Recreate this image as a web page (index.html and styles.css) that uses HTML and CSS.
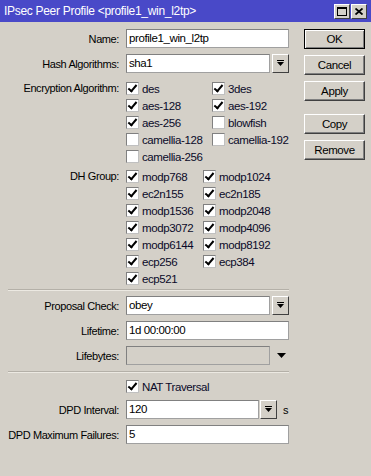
FILE: index.html
```html
<!DOCTYPE html>
<html lang="en">
<head>
    <meta charset="UTF-8">
    <meta name="viewport" content="width=device-width, initial-scale=1.0">
    <title>IPsec Peer Profile</title>
    <link rel="stylesheet" href="styles.css">
</head>
<body>

<div class="window">

    <!-- Title bar -->
    <div class="titlebar">
        <span class="title">IPsec Peer Profile &lt;profile1_win_l2tp&gt;</span>
        <div class="title-buttons">
            <span class="tbtn">
                <svg width="10" height="9" viewBox="0 0 10 9"><rect x="0.5" y="0.5" width="9" height="8" fill="none" stroke="#000"/><rect x="0" y="0" width="10" height="2" fill="#000"/></svg>
            </span>
            <span class="tbtn">
                <svg width="8" height="7" viewBox="0 0 8 7"><path d="M0.5 0.5 L7.5 6.5 M7.5 0.5 L0.5 6.5" stroke="#000" stroke-width="1.8"/></svg>
            </span>
        </div>
    </div>

    <div class="content">

        <!-- Form -->
        <div class="form">
            <div class="row">
                <span class="lbl">Name:</span>
                <div class="field">profile1_win_l2tp</div>
            </div>
            <div class="row">
                <span class="lbl">Hash Algorithms:</span>
                <div class="field short">sha1</div>
                <span class="drop"><svg width="7" height="7" viewBox="0 0 7 7"><rect x="0" y="0" width="7" height="1" fill="#000"/><polygon points="0,2 7,2 3.5,6" fill="#000"/></svg></span>
            </div>

            <div class="row checks enc">
                <span class="lbl">Encryption Algorithm:</span>
                <div class="grid enc-grid">
                    <span class="opt"><i class="cb on"></i>des</span>
                    <span class="opt"><i class="cb on"></i>3des</span>
                    <span class="opt"><i class="cb on"></i>aes-128</span>
                    <span class="opt"><i class="cb on"></i>aes-192</span>
                    <span class="opt"><i class="cb on"></i>aes-256</span>
                    <span class="opt"><i class="cb"></i>blowfish</span>
                    <span class="opt"><i class="cb"></i>camellia-128</span>
                    <span class="opt"><i class="cb"></i>camellia-192</span>
                    <span class="opt"><i class="cb"></i>camellia-256</span>
                </div>
            </div>

            <div class="row checks dh">
                <span class="lbl">DH Group:</span>
                <div class="grid dh-grid">
                    <span class="opt"><i class="cb on"></i>modp768</span>
                    <span class="opt"><i class="cb on"></i>modp1024</span>
                    <span class="opt"><i class="cb on"></i>ec2n155</span>
                    <span class="opt"><i class="cb on"></i>ec2n185</span>
                    <span class="opt"><i class="cb on"></i>modp1536</span>
                    <span class="opt"><i class="cb on"></i>modp2048</span>
                    <span class="opt"><i class="cb on"></i>modp3072</span>
                    <span class="opt"><i class="cb on"></i>modp4096</span>
                    <span class="opt"><i class="cb on"></i>modp6144</span>
                    <span class="opt"><i class="cb on"></i>modp8192</span>
                    <span class="opt"><i class="cb on"></i>ecp256</span>
                    <span class="opt"><i class="cb on"></i>ecp384</span>
                    <span class="opt"><i class="cb on"></i>ecp521</span>
                </div>
            </div>

            <div class="sep"></div>

            <div class="row first">
                <span class="lbl">Proposal Check:</span>
                <div class="field short">obey</div>
                <span class="drop"><svg width="7" height="7" viewBox="0 0 7 7"><rect x="0" y="0" width="7" height="1" fill="#000"/><polygon points="0,2 7,2 3.5,6" fill="#000"/></svg></span>
            </div>
            <div class="row">
                <span class="lbl">Lifetime:</span>
                <div class="field">1d 00:00:00</div>
            </div>
            <div class="row">
                <span class="lbl">Lifebytes:</span>
                <div class="field short disabled"></div>
                <span class="arrow"><svg width="9" height="5" viewBox="0 0 9 5"><polygon points="0,0 9,0 4.5,5" fill="#000"/></svg></span>
            </div>

            <div class="sep"></div>

            <div class="row nat">
                <span class="lbl"></span>
                <span class="opt"><i class="cb on"></i>NAT Traversal</span>
            </div>
            <div class="row">
                <span class="lbl">DPD Interval:</span>
                <div class="field shorter">120</div>
                <span class="drop"><svg width="7" height="7" viewBox="0 0 7 7"><rect x="0" y="0" width="7" height="1" fill="#000"/><polygon points="0,2 7,2 3.5,6" fill="#000"/></svg></span>
                <span class="unit">s</span>
            </div>
            <div class="row">
                <span class="lbl">DPD Maximum Failures:</span>
                <div class="field">5</div>
            </div>
        </div>

        <!-- Buttons -->
        <div class="buttons">
            <span class="btn default">OK</span>
            <span class="btn">Cancel</span>
            <span class="btn">Apply</span>
            <span class="btn gap">Copy</span>
            <span class="btn">Remove</span>
        </div>

    </div>
</div>

</body>
</html>
```

FILE: styles.css
```css
/* Base */
* {
    margin: 0;
    padding: 0;
    box-sizing: border-box;
}

body {
    font-family: "Liberation Sans", Arial, sans-serif;
    font-size: 11px;
    letter-spacing: -0.4px;
    color: #000;
    background: #d4d0c8;
}

.window {
    width: 371px;
    height: 476px;
    background: #d4d0c8;
}

/* Title bar */
.titlebar {
    height: 22px;
    background: #4949c8;
    display: flex;
    align-items: center;
    justify-content: space-between;
    padding: 0 4px 0 4px;
}

.title {
    color: #fff;
    font-size: 12px;
    letter-spacing: -0.3px;
}

.title-buttons {
    display: flex;
    gap: 1px;
}

.tbtn {
    width: 16px;
    height: 15px;
    background: #d4d0c8;
    border: 1px solid;
    border-color: #fff #404040 #404040 #fff;
    display: flex;
    align-items: center;
    justify-content: center;
}

/* Content */
.content {
    display: flex;
    padding-top: 7px;
}

.form {
    width: 304px;
}

.row {
    display: flex;
    align-items: center;
    height: 19px;
    margin-bottom: 6px;
}

.lbl {
    width: 119px;
    flex: none;
    text-align: right;
    margin-right: 7px;
    white-space: nowrap;
}

.field {
    width: 163px;
    height: 19px;
    background: #fff;
    border: 1px solid;
    border-color: #808080 #a0a0a0 #a0a0a0 #808080;
    padding-left: 2px;
    line-height: 17px;
    font-size: 11.5px;
}

.field.short {
    width: 144px;
}

.field.shorter {
    width: 133px;
}

.field.disabled {
    background: #d4d0c8;
}

.drop {
    width: 17px;
    height: 19px;
    margin-left: 2px;
    border: 1px solid;
    border-color: #fff #404040 #404040 #fff;
    display: flex;
    align-items: center;
    justify-content: center;
}

.row .field.shorter + .drop {
    margin-left: 1px;
}

.arrow {
    margin-left: 7px;
    display: flex;
}

.unit {
    margin-left: 6px;
}

/* Checkbox groups */
.row.checks {
    height: auto;
    align-items: flex-start;
}

.row.checks .lbl {
    line-height: 17px;
}

.row.enc {
    margin-top: 7px;
    margin-bottom: 3px;
}

.row.dh {
    margin-bottom: 2px;
}

.grid {
    display: grid;
    grid-auto-rows: 17px;
}

.enc-grid {
    grid-template-columns: 86px auto;
}

.dh-grid {
    grid-template-columns: 77px auto;
}

.opt {
    display: flex;
    align-items: center;
    height: 17px;
    white-space: nowrap;
    font-size: 11.5px;
    color: #0a0a28;
}

.cb {
    position: relative;
    width: 13px;
    height: 13px;
    flex: none;
    background: #fff;
    border: 1px solid;
    border-color: #808080 #c0c0c0 #c0c0c0 #808080;
    margin-right: 3px;
}

.cb.on::after {
    content: "";
    position: absolute;
    left: 3px;
    top: 0px;
    width: 3px;
    height: 7px;
    border: solid #000;
    border-width: 0 2px 2px 0;
    transform: rotate(40deg);
}

.sep {
    width: 281px;
    margin-left: 8px;
    border-top: 1px solid #b4b0a8;
    border-bottom: 1px solid #ece9e2;
}

.row.first {
    margin-top: 5px;
}

.sep + .row.nat {
    margin-top: 5px;
}

.row.nat {
    height: 17px;
    margin-bottom: 5px;
}

/* Buttons */
.buttons {
    display: flex;
    flex-direction: column;
    gap: 6px;
    padding-top: 0px;
}

.btn {
    width: 61px;
    height: 20px;
    border: 1px solid;
    border-color: #fff #404040 #404040 #fff;
    box-shadow: inset -1px -1px #808080;
    text-align: center;
    line-height: 18px;
    font-size: 11.5px;
}

.btn.default {
    border: 1px solid #000;
    box-shadow: inset 1px 1px #fff, inset -1px -1px #808080;
}

.btn.gap {
    margin-top: 7px;
}
```
